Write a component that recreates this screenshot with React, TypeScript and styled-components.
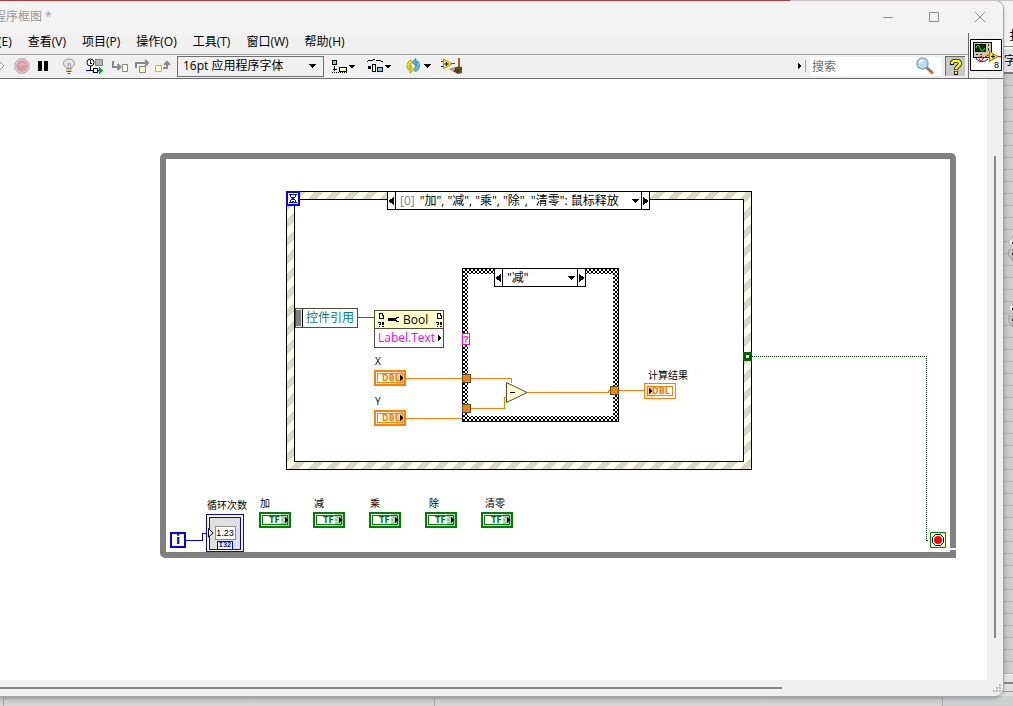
import React from "react";
import styled, { createGlobalStyle } from "styled-components";

const uiFont = `"Open Sans", "Noto Sans CJK SC", sans-serif`;
const colors = {
  chrome: "#f0f0f0",
  title: "#f3f3f3",
  float: "#ff8000",
  bool: "#008000",
  int: "#0000ff",
  ref: "#008080",
  text: "#ff00ff",
  edge: "#504f30",
  cream: "#ffffcc",
};

const GlobalStyle = createGlobalStyle`
  *, *::before, *::after { box-sizing: border-box; }
  body { margin: 0; font: 12px/16px ${uiFont}; color: #000; background: #cfcfcf; overflow: hidden; }
  button, input, select { font: inherit; color: inherit; margin: 0; padding: 0; border: 0; background: none; border-radius: 0; outline: 0; }
  button { display: flex; align-items: center; justify-content: center; }
  svg { display: block; flex: none; }
`;

/* ---------- desktop behind the window ---------- */

const Desktop = styled.div`
  display: grid;
  grid-template-columns: minmax(0, 1fr) 10px;
  grid-template-rows: 1px minmax(0, 1fr) 10px;
  height: 100vh;
  min-height: 600px;
  background: #f0f0f0;
`;
const TopStrip = styled.div`
  grid-column: 1 / 3;
  background: linear-gradient(90deg, #a83e3e 0 78%, #c8c4c4 78% 100%);
`;
const BackWindow = styled.div`
  display: flex;
  flex-direction: column;
  overflow: hidden;
  background: #f3f3f3;
  box-shadow: -8px 0 0 #f3f3f3;
`;
const BackMenu = styled.div`
  height: 46px;
  padding: 27px 0 0 6px;
  white-space: nowrap;
  border-bottom: 1px solid #8a8a8a;
`;
const BackTools = styled.div`
  height: 27px;
  padding: 4px 0 0 1px;
  white-space: nowrap;
  background: #e4e4e4;
  border-top: 2px solid #fafafa;
  border-bottom: 2px solid #777;
`;
const BackGrid = styled.div`
  flex: 1;
  display: flex;
  flex-direction: column;
  gap: 40px;
  padding: 162px 0 0 5px;
  background: linear-gradient(90deg, rgba(0, 0, 0, 0.08), transparent),
    repeating-linear-gradient(180deg, #d0d0d0 0 11px, #b8b8b8 11px 12px);
`;
const BackFoot = styled.div`
  height: 22px;
  background: linear-gradient(180deg, #f4f4f4 0 1px, #e2e2e2 1px 8px, #888 8px 10px, #e0e0e0 10px 17px, #999 17px 18px, #dcdcdc 18px);
`;
const BottomStrip = styled.div`
  grid-column: 1 / 3;
  display: grid;
  grid-template-columns: 4px 431px 1fr 70px;
  background: linear-gradient(180deg, #c4c4c4, #d6d6d6);
  & > i { border-right: 1px solid #aaa9ae; }
  & > i:last-child { border: 0; background: #cdd0d0; }
`;

/* ---------- window chrome ---------- */

const Window = styled.main`
  display: flex;
  flex-direction: column;
  min-width: 0;
  overflow: hidden;
  background: ${colors.chrome};
  border-radius: 0 8px 8px 0;
  box-shadow: 0 0 0 1px #a6a6a6, 0 2px 4px rgba(0, 0, 0, 0.3);
  clip-path: inset(0 -10px -10px 0);
  z-index: 1;
`;
const TitleBar = styled.header`
  display: flex;
  align-items: center;
  height: 32px;
  background: ${colors.title};
  color: #999;
`;
const Title = styled.h1`
  flex: 1;
  margin: 0 0 0 -6px;
  font-size: 12px;
  font-weight: 400;
`;
const CaptionButton = styled.button`
  width: 46px;
  height: 30px;
`;
const Head = styled.div`
  display: flex;
  height: 46px;
  border-bottom: 1px solid #696969;
`;
const HeadMain = styled.div`
  flex: 1;
  min-width: 0;
`;
const MenuBar = styled.nav`
  display: flex;
  align-items: center;
  gap: 16px;
  height: 21px;
  margin-left: -2px;
  padding-bottom: 3px;
  & > button { white-space: nowrap; }
`;
const Toolbar = styled.div`
  display: flex;
  align-items: center;
  height: 24px;
  padding-bottom: 1px;
  border-top: 1px solid #a0a0a0;
`;
const Tool = styled.button<{ $w: number }>`
  flex: none;
  width: ${(p) => p.$w}px;
  height: 22px;
  justify-content: flex-start;
`;
const SelectBox = styled.label`
  position: relative;
  display: flex;
  align-items: center;
  flex: 1;
  min-width: 0;
  & > select { appearance: none; width: 100%; height: 16px; line-height: 16px; }
  & > svg { position: absolute; right: 7px; pointer-events: none; }
`;
const FontBox = styled(SelectBox)`
  flex: none;
  width: 147px;
  height: 21px;
  margin-right: 8px;
  padding-left: 5px;
  border: 1px solid #6d6d6d;
`;
const Spacer = styled.div`
  flex: 1;
`;
const SearchBox = styled.label`
  display: flex;
  align-items: center;
  width: 131px;
  height: 19px;
  margin: 0 4px;
  padding: 0 7px 0 2px;
  background: #fff;
  & > input { flex: 1; min-width: 0; height: 19px; }
  & > input::placeholder { color: #6d6d6d; opacity: 1; }
`;
const Divider = styled.span`
  width: 1px;
  height: 12px;
  margin-left: 2px;
  background: #a0a0a0;
`;
const HelpButton = styled.button`
  width: 20px;
  height: 20px;
  margin-right: 3px;
  background: #c8c8c8;
  border-top: 1px solid #696969;
  border-left: 1px solid #696969;
`;
const ViIcon = styled.div`
  display: flex;
  align-items: center;
  width: 35px;
  padding: 0 0 1px 1px;
  border-left: 1px solid #696969;
`;

const Body = styled.div`
  flex: 1;
  display: flex;
  min-height: 0;
`;
const VScroll = styled.div`
  width: 16px;
  padding: 77px 0 0 7px;
  &::before { content: ""; display: block; width: 2px; height: 92%; background: #858585; }
`;
const HScroll = styled.div`
  display: flex;
  align-items: center;
  justify-content: space-between;
  height: 16px;
  &::before { content: ""; width: 78%; height: 2px; background: #858585; }
`;

/* ---------- block diagram ---------- */

const Canvas = styled.section`
  position: relative;
  flex: 1;
  overflow: hidden;
  background: #fff;
`;
const Node = styled.div<{ $x: number; $y: number }>`
  position: absolute;
  left: ${(p) => p.$x}px;
  top: ${(p) => p.$y}px;
`;
const Loop = styled(Node)`
  width: 796px;
  height: 405px;
  border: 6px solid #808080;
  border-radius: 5px 5px 0 5px;
`;
const EventFrame = styled(Node)`
  width: 466px;
  height: 279px;
  padding: 7px;
  border: 1px solid #000;
  background: linear-gradient(135deg, #ffffe5 25%, #d8d8c4 25% 50%, #ffffe5 50% 75%, #d8d8c4 75%) 0 0 / 18px 18px;
  &::after { content: ""; display: block; height: 100%; border: 1px solid #000; background: #fff; }
`;
const CaseFrame = styled(Node)`
  width: 157px;
  height: 154px;
  padding: 5px;
  border: 1px solid #000;
  background: conic-gradient(#000 25%, #fff 25% 50%, #000 50% 75%, #fff 75%) 0 0 / 4px 4px;
  &::after { content: ""; display: block; height: 100%; background: #fff; }
`;
const Selector = styled(Node)<{ $w: number }>`
  display: flex;
  width: ${(p) => p.$w}px;
  height: 19px;
  border: 1px solid #000;
  background: #fff;
  & > button { width: 8px; }
  & > button:last-child { border-left: 1px solid #000; }
  & > button:first-child { border-right: 1px solid #000; }
  & > ${SelectBox} { padding-left: 4px; }
  & > ${SelectBox} > svg { right: 2px; }
`;
const Index = styled.span`
  margin-right: 5px;
  color: #808080;
`;
const Reference = styled(Node)`
  display: flex;
  align-items: center;
  width: 63px;
  height: 20px;
  border: 1px solid ${colors.edge};
  background: #fff;
  color: ${colors.ref};
  &::before {
    content: "";
    width: 6px;
    height: 18px;
    margin-right: 4px;
    border: solid #e8e8e0;
    border-width: 1px 1px 1px 0;
    box-shadow: 1px 0 0 #000;
    background: #808080;
  }
`;
const PropertyNode = styled(Node)`
  width: 70px;
  height: 38px;
  border: 1px solid ${colors.edge};
  background: #fff;
`;
const PropertyHead = styled.div`
  display: flex;
  align-items: center;
  justify-content: space-between;
  gap: 3px;
  height: 18px;
  padding-left: 3px;
  background: ${colors.cream};
  border-bottom: 1px solid ${colors.edge};
  & > span { flex: 1; }
`;
const PropertyRow = styled.div`
  display: flex;
  align-items: center;
  justify-content: space-between;
  height: 18px;
  padding: 0 1px 0 3px;
  color: ${colors.text};
`;
const Caption = styled(Node)`
  font-size: 10px;
  line-height: 14px;
  white-space: nowrap;
`;
const Terminal = styled(Node)<{ $color: string; $out?: boolean; $indent?: number }>`
  display: flex;
  align-items: center;
  justify-content: center;
  width: 32px;
  height: 16px;
  padding: ${(p) => (p.$out ? "2px" : "1px")};
  border: ${(p) => (p.$out ? 1 : 2)}px solid ${(p) => p.$color};
  background: #fff;
  color: ${(p) => p.$color};
  font: bold 8px/10px "DejaVu Sans", sans-serif;
  & > span { flex: 1; height: 10px; padding-left: ${(p) => p.$indent ?? 4}px; border: 1px solid ${(p) => p.$color}; }
  & > svg { position: absolute; top: 0; ${(p) => (p.$out ? "left: 0" : "right: 0")}; }
`;
const Tunnel = styled(Node)<{ $color: string }>`
  width: 9px;
  height: 9px;
  border: 1px solid ${colors.edge};
  background: ${(p) => p.$color};
`;
const BoolTunnel = styled(Node)`
  width: 9px;
  height: 9px;
  border: 3px solid #006400;
  background: #d8ffd8;
`;
const CaseInput = styled(Node)`
  width: 8px;
  height: 12px;
  border: 1px solid ${colors.text};
  background: ${colors.cream};
  color: ${colors.text};
  font: bold 9px/10px "Liberation Sans", sans-serif;
  text-align: center;
`;
const Iteration = styled(Node)`
  width: 16px;
  height: 16px;
  border: 2px solid ${colors.int};
  background: ${colors.cream};
  color: ${colors.int};
  font: bold 12px/13px "DejaVu Sans", sans-serif;
  text-align: center;
`;
const Numeric = styled(Node)`
  width: 38px;
  height: 38px;
  padding: 2px;
  border: 1px solid ${colors.int};
  background: #fff;
`;
const NumericFace = styled.div`
  display: flex;
  flex-direction: column;
  align-items: center;
  justify-content: space-between;
  height: 33px;
  padding-top: 8px;
  border: 1px solid ${colors.int};
  background: #e0e0e0;
  & > span {
    width: 21px;
    height: 14px;
    border: 1px solid #909090;
    background: #fff;
    font: 9px/12px "Liberation Sans", sans-serif;
    text-align: center;
  }
  & > b {
    width: 16px;
    height: 8px;
    border: 1px solid ${colors.int};
    border-bottom: 0;
    background: #fff;
    color: ${colors.int};
    font: bold 7px/7px "Liberation Mono", monospace;
    text-align: center;
  }
`;
const Wires = styled.svg`
  position: absolute;
  inset: 0;
  width: 100%;
  height: 100%;
  fill: none;
  shape-rendering: crispEdges;
`;

/* ---------- icons ---------- */

const Down = () => (
  <svg width="7" height="4" shapeRendering="crispEdges"><path d="M0 0H7L3.5 4Z" fill="#000" /></svg>
);
const Side = ({ left }: { left?: boolean }) => (
  <svg width="7" height="8" shapeRendering="crispEdges">
    <path d={left ? "M6 0V8L0 4Z" : "M1 0V8L7 4Z"} fill="#000" />
  </svg>
);
const TerminalArrow = ({ color, out }: { color: string; out?: boolean }) => (
  <svg width="9" height="14" shapeRendering="crispEdges">
    <rect x="1" y={out ? 1 : 0} width="8" height="12" fill={color} opacity="0.35" />
    <path d={out ? "M4 4V10L7 7Z" : "M5 3V9L8 6Z"} fill="#000" />
  </svg>
);
const PageMark = () => (
  <svg width="7" height="16" shapeRendering="crispEdges" fill="none" stroke="#000">
    <path d="M1.5 1.5H4.5V3.5H5.5V6.5H1.5Z" />
    <path d="M0 10.5H3M2.5 10V12.5H1M1 14.5H2" /><path d="M5 10V13M5 14V15" strokeWidth="2" />
  </svg>
);

const RunIcon = () => (
  <svg width="5" height="16" fill="#fff" stroke="#999"><path d="M-6 5H-2V2L4 8L-2 14V11" /></svg>
);
const AbortIcon = () => (
  <svg width="16" height="16">
    <path d="M5 1H11L15 5V11L11 15H5L1 11V5Z" fill="#e8e8e8" stroke="#a0a0a0" />
    <circle cx="8" cy="8" r="6" fill="#db9da0" /><path d="M4 7A5 5 0 0 1 12 7Z" fill="#e8b9ba" />
  </svg>
);
const PauseIcon = () => (
  <svg width="10" height="10"><path d="M0 0H4V10H0ZM6 0H10V10H6Z" fill="#000" /></svg>
);
const BulbIcon = () => (
  <svg width="14" height="17" fill="none">
    <path d="M4.5 10.5C4 8.500 1.500 8 1.500 5.500A5.500 4.500 0 0 1 12.500 5.500C12.500 8 10 8.500 9.500 10.500Z" fill="#e6e6e6" stroke="#8c8c8c" />
    <path d="M5 5L6.500 7L7.500 5L9 7M6 7V10M8.500 7V10" stroke="#999" />
    <path d="M4.500 11H9.500V13H4.500Z" fill="#e4c544" /><path d="M4.500 13.500H9.500M5.500 15.500H8.500" stroke="#555" />
  </svg>
);
const RetainIcon = () => (
  <svg width="18" height="17" fill="none" shapeRendering="crispEdges">
    <circle cx="4.500" cy="4.500" r="3.500" fill="#fff" stroke="#000" shapeRendering="auto" />
    <path d="M4.500 2V5H6M4.500 8V12.500H7M1 12.500H4" stroke="#000" />
    <path d="M9.500 1.500H16.500V7.500H9.500Z" fill="#b4b4b4" stroke="#808080" />
    <path d="M0 12.500H3M11 12.500H14" stroke="#0000ff" />
    <path d="M7.500 10.500H11.500V14.500H7.500Z" fill="#fff" stroke="#000" />
    <path d="M13 9L17 12.500L13 16Z" fill="#00b400" />
  </svg>
);
const StepIcon = ({ kind }: { kind: "into" | "over" | "out" }) => (
  <svg width="18" height="15" fill="none" stroke="#888">
    {kind === "into" && <><path d="M1 2V8H8M5.500 5L8.500 8L5.500 11" strokeWidth="2" /><path d="M10.500 5.500H15.500V12.500H10.500Z" fill="#ffffe0" /></>}
    {kind === "over" && <><path d="M1 9V4H12M10 1L13 4L10 7" strokeWidth="2" /><path d="M4.500 7.500H10.500V13.500H4.500Z" fill="#ffffc0" /></>}
    {kind === "out" && <><path d="M8 9H12V4M9 6L12 3L15 6" strokeWidth="2" /><path d="M0.500 6.500H6.500V12.500H0.500Z" fill="#ffffc0" stroke="#aaa" /></>}
  </svg>
);
const AlignIcon = () => (
  <svg width="24" height="15" fill="none" stroke="#000" shapeRendering="crispEdges">
    <path d="M0.500 1.500H4.500V5.500H0.500Z" fill="#5cd6ff" />
    <path d="M2.500 7V12M0.500 10.500H4.500M0 13.500H1M2 13.500H3M4 13.500H5M6 13.500H7M8 13.500H9M10 13.500H11M12 13.500H13M14 13.500H15" />
    <path d="M7.500 8.500H14.500V12.500H7.500Z" fill="#ffff99" /><path d="M17 6H23L20 10Z" fill="#000" stroke="none" />
  </svg>
);
const DistributeIcon = () => (
  <svg width="26" height="15" fill="none" stroke="#000" shapeRendering="crispEdges">
    <path d="M0 2.500H1M1 1.500H6M6 0.500H8M9 1.500H14M14 2.500H16" />
    <path d="M1 7H4V10H1Z" fill="#000" stroke="none" />
    <path d="M5.500 5.500H8.500V12.500H5.500Z" fill="#ffff99" /><path d="M10.500 8.500H15.500V12.500H10.500Z" fill="#5cd6ff" />
    <path d="M18 6H24L21 10Z" fill="#000" stroke="none" />
  </svg>
);
const ReorderIcon = () => (
  <svg width="27" height="16" fill="none">
    <path d="M7 3.500A4.500 4.500 0 0 0 5 11" stroke="#8d8600" strokeWidth="4" />
    <path d="M7 3.500A4.500 4.500 0 0 0 5 11" stroke="#e8de10" strokeWidth="3" />
    <path d="M5 7.500V15L9 11.500Z" fill="#e8de10" stroke="#8d8600" strokeWidth="0.700" />
    <path d="M9.500 12A4.500 4.500 0 0 0 11 4" stroke="#246d8a" strokeWidth="4" />
    <path d="M9.500 12A4.500 4.500 0 0 0 11 4" stroke="#58bfe0" strokeWidth="3" />
    <path d="M11 0.500V8L7 4Z" fill="#58bfe0" stroke="#246d8a" strokeWidth="0.700" />
    <path d="M19 6H26L22.500 10Z" fill="#000" shapeRendering="crispEdges" />
  </svg>
);
const CleanupIcon = () => (
  <svg width="23" height="17" fill="none">
    <path d="M0 3.500H3" stroke="#e00" /><path d="M0 8.500H3" stroke="#00c" /><path d="M10 5.500H14" stroke="#e00" />
    <path d="M2.500 1V10.500L11 6Z" fill="#ffee00" stroke="#a59200" /><path d="M3.500 6H7.500M5.500 4V8" stroke="#000" />
    <path d="M17 0H19V9H17Z" fill="#94662b" /><path d="M8 11L17 8.500L21 9V15L17 16Z" fill="#6b4a25" />
    <path d="M8 11L14 9V14Z" fill="#b7a07b" /><path d="M13 14L15 11M16 15L18 11" stroke="#2e1d0b" />
  </svg>
);
const MagnifierIcon = () => (
  <svg width="18" height="18" fill="none">
    <path d="M10.500 10.500L16 15.500" stroke="#ad6b3f" strokeWidth="3" strokeLinecap="round" />
    <circle cx="6.500" cy="6.500" r="5.500" fill="#b7e0fa" stroke="#7eaed4" strokeWidth="1.500" />
    <path d="M3.500 6A3.500 3.500 0 0 1 7 3.500" stroke="#fff" strokeWidth="2" />
  </svg>
);
const HelpIcon = () => (
  <svg width="14" height="18" fill="none">
    <path d="M3 7V5C3 2 11 2 11 5.500C11 8.500 7 8 7 12M7 13V17" stroke="#000" strokeWidth="4" />
    <path d="M3 6V5C3 2 11 2 11 5.500C11 8.500 7 8 7 11.500M7 13.500V16" stroke="#ff0" strokeWidth="2.500" />
  </svg>
);
const ScopeIcon = () => (
  <svg width="32" height="32" fill="none" role="img" aria-label="VI">
    <path d="M0.500 0.500H31.500V31.500H0.500Z" fill="#fff" stroke="#000" />
    <g shapeRendering="crispEdges">
      <path d="M3.500 3.500H21.500V18.500H3.500Z" fill="#cfcba0" stroke="#000" />
      <path d="M5.500 5.500H15.500V12.500H5.500Z" fill="#052b05" stroke="#000" />
      <path d="M18.500 5V7M18.500 9V12M6 15.500H8M10 15.500H12" stroke="#333" />
    </g>
    <path d="M6 9Q8 3 10 9T15 9" stroke="#2ee82e" />
    <path d="M5.500 18Q7 22.500 11.500 22.500Q16 22.500 18 20" stroke="#00c" />
    <path d="M9 19.500A2 2 0 1 0 13 19.500L19 15.500M13 19.500A2 2 0 0 0 9 19.500M27 17.500H31" stroke="#e00" />
    <path d="M19.500 12.500V22.500L28 17.500Z" fill="#ffee00" stroke="#8c8000" /><path d="M21 17.500H25M23 15.500V19.500" stroke="#000" />
    <text x="24" y="29" fill="#000" fontFamily="Liberation Sans" fontSize="9">8</text>
  </svg>
);
const SpinnerShape = () => (
  <svg width="5" height="26">
    <path d="M5 0L1 5V9H5Z" fill="#efefef" stroke="#aaa" /><path d="M0 14H5V25L1 20Z" fill="#c4c4c4" stroke="#999" />
    <path d="M4 6H5V8H4ZM4 17H5V19H4Z" fill="#222" />
  </svg>
);

/* ---------- data ---------- */

const menus = ["(E)", "查看(V)", "项目(P)", "操作(O)", "工具(T)", "窗口(W)", "帮助(H)"];
const boolTerminals = [
  { x: 259, label: "加" },
  { x: 313, label: "减" },
  { x: 369, label: "乘" },
  { x: 425, label: "除", dx: 4 },
  { x: 481, label: "清零", dx: 4 },
];

const CaseSelector = ({ x, y, w, index, value, name }: { x: number; y: number; w: number; index?: string; value: string; name: string }) => (
  <Selector $x={x} $y={y} $w={w}>
    <button aria-label={`${name} 上一个`}><Side left /></button>
    <SelectBox>
      {index && <Index>{index}</Index>}
      <select aria-label={name}><option>{value}</option></select>
      <Down />
    </SelectBox>
    <button aria-label={`${name} 下一个`}><Side /></button>
  </Selector>
);

const Diagram = () => (
  <Canvas aria-label="程序框图">
    <Loop $x={160} $y={74} />
    <EventFrame $x={286} $y={112} />
    <CaseFrame $x={462} $y={189} />
    <Wires>
      <path d="M947 469H956V471H947Z" fill="#fff" />
      <path d="M358 238.500H374" stroke={colors.ref} />
      <path
        d="M406 299.500H462M471 299.500H511.500V304M471 329.500H504.500V318.500H507M406 339.500H462M527 313.500H608.500V311.500H610M619 311.500H644"
        stroke={colors.float}
      />
      <path d="M186 461.500H202.500V454.500H207" stroke={colors.int} />
      <g stroke="#004000" strokeDasharray="1 1">
        <path d="M752 277.500H927" /><path d="M926.500 279V462" /><path d="M927 461.500H929" />
      </g>
      <path d="M506.500 303.500V323.500L527 313.500Z" fill={colors.cream} stroke={colors.edge} shapeRendering="auto" />
      <path d="M510 313.500H515" stroke="#000" />
    </Wires>
    <Node $x={286} $y={112}>
      <svg width="14" height="15" fill="none" shapeRendering="crispEdges">
        <path d="M1 1H13V14H1Z" fill="#fff" stroke={colors.int} strokeWidth="2" />
        <path d="M3 3.500H11M3 11.500H11M4.500 4V5.500L9.500 9.500V11M9.500 4V5.500L4.500 9.500V11M6 10.500H8" stroke={colors.int} />
      </svg>
    </Node>
    <CaseSelector x={387} y={112} w={263} index="[0]" value={'"加", "减", "乘", "除", "清零": 鼠标释放'} name="事件" />
    <CaseSelector x={494} y={189} w={92} value={'"减"'} name="条件" />
    <Reference $x={295} $y={229}>控件引用</Reference>
    <PropertyNode $x={374} $y={231}>
      <PropertyHead>
        <PageMark />
        <svg width="12" height="7" fill="none" shapeRendering="crispEdges">
          <path d="M0 2H7V5H0Z" fill="#000" /><path d="M11 1.500H8.500L7.500 3.500L8.500 5.500H11" stroke="#000" />
        </svg>
        <span>Bool</span>
        <PageMark />
      </PropertyHead>
      <PropertyRow>
        Label.Text
        <svg width="4" height="8" shapeRendering="crispEdges"><path d="M0 1V7L4 4Z" fill="#000" /></svg>
      </PropertyRow>
    </PropertyNode>
    <CaseInput $x={462} $y={254}>?</CaseInput>
    <Caption $x={375} $y={275}>X</Caption>
    <Terminal $x={374} $y={291} $color={colors.float}><span>DBL</span><TerminalArrow color={colors.float} /></Terminal>
    <Caption $x={375} $y={315}>Y</Caption>
    <Terminal $x={374} $y={331} $color={colors.float}><span>DBL</span><TerminalArrow color={colors.float} /></Terminal>
    <Tunnel $x={462} $y={295} $color={colors.float} />
    <Tunnel $x={462} $y={325} $color={colors.float} />
    <Tunnel $x={610} $y={307} $color={colors.float} />
    <Caption $x={648} $y={289}>计算结果</Caption>
    <Terminal $x={644} $y={304} $color={colors.float} $out><span>DBL</span><TerminalArrow color={colors.float} out /></Terminal>
    <BoolTunnel $x={743} $y={273} />
    <Iteration $x={170} $y={453}>i</Iteration>
    <Caption $x={207} $y={419}>循环次数</Caption>
    <Numeric $x={206} $y={435}>
      <NumericFace><span>1.23</span><b>I32</b></NumericFace>
    </Numeric>
    <Node $x={208} $y={449}>
      <svg width="6" height="10"><path d="M0.500 0.500V9L5 5Z" fill="#fff" stroke="#000" /></svg>
    </Node>
    {boolTerminals.map((t) => (
      <React.Fragment key={t.x}>
        <Caption $x={t.x + (t.dx ?? 1)} $y={417}>{t.label}</Caption>
        <Terminal $x={t.x} $y={433} $color={colors.bool} $indent={6}><span>TF</span><TerminalArrow color={colors.bool} /></Terminal>
      </React.Fragment>
    ))}
    <Node $x={930} $y={453}>
      <svg width="16" height="16">
        <path d="M0.500 0.500H15.500V15.500H0.500Z" fill={colors.cream} stroke={colors.bool} />
        <path d="M5.500 2.500H10.500L13.500 5.500V10.500L10.500 13.500H5.500L2.500 10.500V5.500Z" fill="#fff" stroke="#000" />
        <circle cx="8" cy="8" r="4" fill="#f00" />
      </svg>
    </Node>
  </Canvas>
);

export default function App() {
  return (
    <>
      <GlobalStyle />
      <Desktop>
        <TopStrip />
        <Window>
          <TitleBar>
            <Title>程序框图 *</Title>
            <CaptionButton aria-label="最小化"><svg width="11" height="11" stroke="#8c8c8c"><path d="M0 5.500H10" /></svg></CaptionButton>
            <CaptionButton aria-label="最大化"><svg width="11" height="11" stroke="#8c8c8c" fill="none"><path d="M0.500 0.500H9.500V9.500H0.500Z" /></svg></CaptionButton>
            <CaptionButton aria-label="关闭"><svg width="11" height="11" stroke="#8c8c8c"><path d="M0 0L10 10M10 0L0 10" /></svg></CaptionButton>
          </TitleBar>
          <Head>
            <HeadMain>
              <MenuBar>{menus.map((m) => <button key={m}>{m}</button>)}</MenuBar>
              <Toolbar>
                <Tool $w={14} aria-label="运行"><RunIcon /></Tool>
                <Tool $w={24} aria-label="中止执行"><AbortIcon /></Tool>
                <Tool $w={24} aria-label="暂停"><PauseIcon /></Tool>
                <Tool $w={24} aria-label="高亮显示执行过程"><BulbIcon /></Tool>
                <Tool $w={26} aria-label="保存连线值"><RetainIcon /></Tool>
                <Tool $w={23} aria-label="单步步入"><StepIcon kind="into" /></Tool>
                <Tool $w={20} aria-label="单步步过"><StepIcon kind="over" /></Tool>
                <Tool $w={22} aria-label="单步步出"><StepIcon kind="out" /></Tool>
                <FontBox>
                  <select aria-label="字体"><option>16pt 应用程序字体</option></select>
                  <Down />
                </FontBox>
                <Tool $w={35} aria-label="对齐对象"><AlignIcon /></Tool>
                <Tool $w={38} aria-label="分布对象"><DistributeIcon /></Tool>
                <Tool $w={36} aria-label="重新排序"><ReorderIcon /></Tool>
                <Tool $w={24} aria-label="整理程序框图"><CleanupIcon /></Tool>
                <Spacer />
                <svg width="5" height="6" shapeRendering="crispEdges"><path d="M0 0V6L4 3Z" fill="#000" /></svg>
                <Divider />
                <SearchBox>
                  <input aria-label="搜索" placeholder="搜索" />
                  <MagnifierIcon />
                </SearchBox>
                <HelpButton aria-label="显示即时帮助"><HelpIcon /></HelpButton>
              </Toolbar>
            </HeadMain>
            <ViIcon><ScopeIcon /></ViIcon>
          </Head>
          <Body>
            <Diagram />
            <VScroll />
          </Body>
          <HScroll>
            <svg width="10" height="10" fill="#b8b8b8" shapeRendering="crispEdges">
              <path d="M6 1H8V3H6ZM3 4H5V6H3ZM6 4H8V6H6ZM0 7H2V9H0ZM3 7H5V9H3ZM6 7H8V9H6Z" />
            </svg>
          </HScroll>
        </Window>
        <BackWindow aria-hidden>
          <BackMenu>扌</BackMenu>
          <BackTools>字</BackTools>
          <BackGrid><SpinnerShape /><SpinnerShape /></BackGrid>
          <BackFoot />
        </BackWindow>
        <BottomStrip><i /><i /><i /><i /></BottomStrip>
      </Desktop>
    </>
  );
}
